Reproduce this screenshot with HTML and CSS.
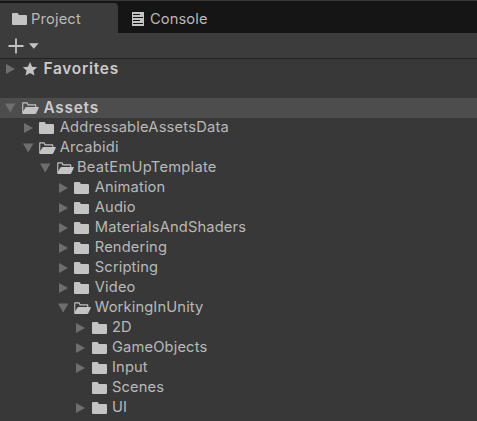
FILE: index.html
```html
<!DOCTYPE html>
<html lang="en">
<head>
<meta charset="utf-8">
<title>Project</title>
<link rel="stylesheet" href="styles.css">
</head>
<body>
<svg class="symbols" aria-hidden="true">
  <symbol id="closed" viewBox="0 0 18 16"><path d="M0 3.1Q0 2 1.1 2H5.3Q6 2 6.3 2.7L6.8 4H13.9Q15 4 15 5.1V12.9Q15 14 13.9 14H1.1Q0 14 0 12.9Z"/></symbol>
  <symbol id="open" viewBox="0 0 18 16"><path fill-rule="evenodd" d="M.2 3.1Q.2 2.3 1 2.3H5Q5.6 2.3 5.9 3L6.4 4.3H13.4Q14.3 4.3 14.3 5.2V7H16.3Q17.2 7 16.8 7.8L14.3 13.2Q13.9 14 13 14H1.2Q.2 14 .2 13ZM1.3 3.4V11.3L3.4 7.6Q3.8 7 4.6 7H13.2V5.4H5.6L4.8 3.4Z"/></symbol>
  <symbol id="star" viewBox="0 0 18 16"><path d="M8 1L10.1 5.7L15.2 6.2L11.4 9.6L12.5 14.6L8 12L3.5 14.6L4.6 9.6L.8 6.2L5.9 5.7Z"/></symbol>
  <symbol id="right" viewBox="0 0 14 14"><path d="M2 2L11 7L2 12Z"/></symbol>
  <symbol id="down" viewBox="0 0 14 14"><path d="M1 2.5H11.4L6.2 11.5Z"/></symbol>
</svg>
<div class="panel">
  <header class="tabs">
    <div class="tab active"><svg class="icon"><use href="#closed"/></svg><span>Project</span></div>
    <div class="tab"><svg class="console" viewBox="0 0 12 14"><path fill-rule="evenodd" d="M0 0H12V14H0ZM1 2V3H8V2ZM1 5V6H11V5ZM1 8V9H8V8ZM1 11V12H11V11Z"/></svg><span>Console</span></div>
  </header>
  <div class="toolbar">
    <svg class="plus" viewBox="0 0 16 16"><path d="M7.1 0.5H8.9V7.1H15.5V8.9H8.9V15.5H7.1V8.9H.5V7.1H7.1Z"/></svg>
    <svg class="caret" viewBox="0 0 10 6"><path d="M0 .3H9.6L4.8 5.7Z"/></svg>
  </div>
  <main class="tree">
    <div class="row root favorites"><svg class="arrow"><use href="#right"/></svg><svg class="icon"><use href="#star"/></svg><span>Favorites</span></div>
    <div class="row root selected"><svg class="arrow"><use href="#down"/></svg><svg class="icon"><use href="#open"/></svg><span>Assets</span></div>
    <div class="row l1"><svg class="arrow"><use href="#right"/></svg><svg class="icon"><use href="#closed"/></svg><span>AddressableAssetsData</span></div>
    <div class="row l1"><svg class="arrow"><use href="#down"/></svg><svg class="icon"><use href="#open"/></svg><span>Arcabidi</span></div>
    <div class="row l2"><svg class="arrow"><use href="#down"/></svg><svg class="icon"><use href="#open"/></svg><span>BeatEmUpTemplate</span></div>
    <div class="row l3"><svg class="arrow"><use href="#right"/></svg><svg class="icon"><use href="#closed"/></svg><span>Animation</span></div>
    <div class="row l3"><svg class="arrow"><use href="#right"/></svg><svg class="icon"><use href="#closed"/></svg><span>Audio</span></div>
    <div class="row l3"><svg class="arrow"><use href="#right"/></svg><svg class="icon"><use href="#closed"/></svg><span>MaterialsAndShaders</span></div>
    <div class="row l3"><svg class="arrow"><use href="#right"/></svg><svg class="icon"><use href="#closed"/></svg><span>Rendering</span></div>
    <div class="row l3"><svg class="arrow"><use href="#right"/></svg><svg class="icon"><use href="#closed"/></svg><span>Scripting</span></div>
    <div class="row l3"><svg class="arrow"><use href="#right"/></svg><svg class="icon"><use href="#closed"/></svg><span>Video</span></div>
    <div class="row l3"><svg class="arrow"><use href="#down"/></svg><svg class="icon"><use href="#open"/></svg><span>WorkingInUnity</span></div>
    <div class="row l4"><svg class="arrow"><use href="#right"/></svg><svg class="icon"><use href="#closed"/></svg><span>2D</span></div>
    <div class="row l4"><svg class="arrow"><use href="#right"/></svg><svg class="icon"><use href="#closed"/></svg><span>GameObjects</span></div>
    <div class="row l4"><svg class="arrow"><use href="#right"/></svg><svg class="icon"><use href="#closed"/></svg><span>Input</span></div>
    <div class="row l4"><svg class="arrow"></svg><svg class="icon"><use href="#closed"/></svg><span>Scenes</span></div>
    <div class="row l4"><svg class="arrow"><use href="#right"/></svg><svg class="icon"><use href="#closed"/></svg><span>UI</span></div>
  </main>
</div>
</body>
</html>
```
FILE: styles.css
```css
* { box-sizing: border-box; }
body {
  margin: 0;
  background: #383838;
  color: #b8b8b8;
  font: 14.7px/20px Inter, "Liberation Sans", sans-serif;
  overflow: hidden;
}
svg { display: block; flex: none; fill: #c4c4c4; }
.symbols { position: absolute; width: 0; height: 0; }
.panel { height: 421px; overflow: hidden; border-top: 1px solid #383838; }
.tabs { display: flex; height: 32px; background: #151515; }
.tab { display: flex; align-items: center; padding: 4px 0 0 14px; }
.tab.active {
  width: 118px;
  height: 30px;
  margin-top: 2px;
  padding: 2px 0 0 12px;
  background: #3c3c3c;
  border-radius: 0 4px 0 0;
  letter-spacing: 0.15px;
}
.tab .icon { margin-right: 1px; }
.console { width: 12px; height: 14px; margin-right: 6px; }
.tab:last-child { letter-spacing: 0.1px; }
.toolbar {
  display: flex;
  align-items: center;
  gap: 5px;
  height: 26px;
  padding-left: 8px;
  background: #3c3c3c;
  border-bottom: 1px solid #232323;
}
.plus { width: 16px; height: 16px; }
.caret { width: 10px; height: 6px; }
.row { display: flex; align-items: center; height: 20px; letter-spacing: 0.2px; white-space: nowrap; }
.row span { padding-bottom: 2px; }
.arrow { width: 14px; height: 14px; margin-right: 4px; fill: #6e6e6e; }
.icon { width: 18px; height: 16px; margin-right: 2px; }
.root { padding-left: 4px; font-size: 15.4px; font-weight: 600; letter-spacing: 0.75px; color: #cbcbcb; }
.root .icon { margin-right: 3.5px; }
.root span { padding-bottom: 1px; }
.favorites { margin-bottom: 19px; }
.selected { background: #4d4d4d; }
.l1 { padding-left: 22px; }
.l1 .arrow, .l3 .arrow { margin-right: 3.4px; }
.l1 .icon, .l3 .icon { margin-right: 2.4px; }
.l2 { padding-left: 39px; letter-spacing: 0.25px; }
.l3 { padding-left: 57px; letter-spacing: 0.14px; }
.l4 { padding-left: 74px; letter-spacing: 0.14px; }
```
